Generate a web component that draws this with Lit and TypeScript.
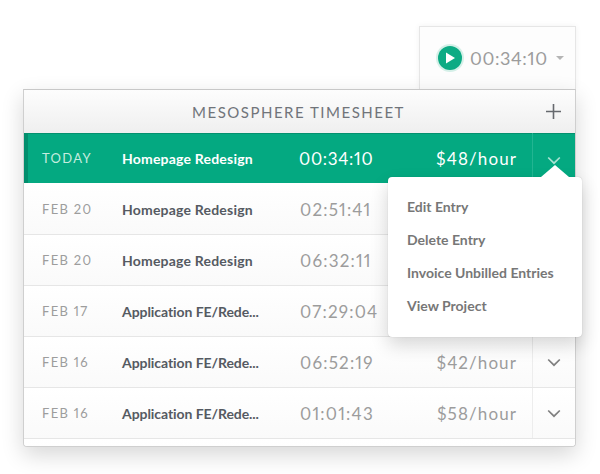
import { LitElement, html, css } from "lit";
import { customElement } from "lit/decorators.js";

// rates of the first three rows sit under the open menu, so they are left out
const rows = [
  { date: "FEB 20", name: "Homepage Redesign", time: "02:51:41", rate: "" },
  { date: "FEB 20", name: "Homepage Redesign", time: "06:32:11", rate: "" },
  { date: "FEB 17", name: "Application FE/Rede...", time: "07:29:04", rate: "" },
  { date: "FEB 16", name: "Application FE/Rede...", time: "06:52:19", rate: "$42/hour" },
  { date: "FEB 16", name: "Application FE/Rede...", time: "01:01:43", rate: "$58/hour" },
];

const chevron = html`<svg width="14" height="9" viewBox="0 0 14 9"><path d="M1.2 1.5 7 7.2l5.8-5.7" fill="none" stroke="currentColor" stroke-width="1.7"/></svg>`;

@customElement("app-root")
export class AppRoot extends LitElement {
  static styles = css`
    :host {
      display: block;
      width: 600px;
      height: 474px;
      overflow: hidden;
      background: #fff;
      font-family: Lato, "Open Sans", sans-serif;
      font-variant-numeric: proportional-nums;
      -webkit-font-smoothing: antialiased;
    }
    .stage {
      position: relative;
      display: flex;
      flex-direction: column;
      align-items: flex-end;
      padding: 26px 24px 0 23px;
    }
    .timer {
      display: flex;
      align-items: center;
      gap: 8px;
      box-sizing: border-box;
      width: 157px;
      height: 63px;
      padding: 0 0 0 18px;
      background: #fdfdfd;
      border: 1px solid #e6e6e6;
      border-bottom: none;
      box-shadow: 0 0 6px rgba(0, 0, 0, 0.06);
    }
    .play {
      display: flex;
      align-items: center;
      justify-content: center;
      width: 24px;
      height: 24px;
      border-radius: 50%;
      background: #0dab84;
      box-shadow: 0 0 0 2px #d5f0e8;
    }
    .timer-text {
      font-size: 18px;
      letter-spacing: 0.6px;
      color: #9c9c9c;
    }
    .caret {
      width: 0;
      height: 0;
      margin-left: 0;
      border: 4px solid transparent;
      border-top: 4px solid #b5b5b5;
      border-bottom: none;
    }
    .panel {
      box-sizing: border-box;
      width: 553px;
      height: 358px;
      overflow: hidden;
      background: #fff;
      border: 1px solid #cfcfcf;
      border-top-color: #c8c8c8;
      border-radius: 0 0 4px 4px;
      box-shadow: 0 8px 22px rgba(0, 0, 0, 0.16);
      position: relative;
    }
    .head {
      display: flex;
      align-items: center;
      justify-content: center;
      position: relative;
      height: 43px;
      padding-right: 2px;
      background: linear-gradient(#fdfdfd, #efefef);
      font-size: 15px;
      letter-spacing: 1.5px;
      color: #70747a;
    }
    .plus {
      position: absolute;
      right: 14px;
      top: 14px;
      display: block;
    }
    .list {
      padding-top: 1px;
    }
    .row {
      display: grid;
      grid-template-columns: 80px 177px 100px 1fr 43px;
      align-items: center;
      height: 51px;
      box-sizing: border-box;
      padding-left: 18px;
      background: linear-gradient(#fff, #fafafa);
      border-bottom: 1px solid #e6e6e6;
    }
    .date {
      font-size: 13px;
      letter-spacing: 1.3px;
      color: #9d9d9d;
    }
    .name {
      font-size: 14px;
      font-weight: 700;
      letter-spacing: 0.2px;
      color: #555a62;
      white-space: nowrap;
    }
    .name.long {
      letter-spacing: -0.07px;
    }
    .time {
      padding-left: 1px;
      font-size: 17px;
      letter-spacing: 1.2px;
      color: #9c9c9c;
    }
    .rate {
      font-size: 17px;
      letter-spacing: 1.1px;
      text-align: right;
      padding-right: 15px;
      color: #9c9c9c;
    }
    .more {
      align-self: stretch;
      display: flex;
      align-items: center;
      justify-content: center;
      border-left: 1px solid #ededed;
      color: #808080;
    }
    .row.active {
      height: 50px;
      padding-left: 18px;
      background: #04a981;
      border-bottom: none;
      box-shadow: inset 4px 0 0 #028e6d, inset 0 1px 0 #03916f;
    }
    .active .date {
      color: #c4ecdf;
    }
    .active .name,
    .active .time,
    .active .rate {
      color: #fff;
    }
    .active .time {
      padding-left: 0;
      letter-spacing: 0.7px;
    }
    .active .more {
      border-left-color: #22b592;
      color: #a9e2d2;
      padding-top: 4px;
    }
    .menu {
      position: absolute;
      left: 388px;
      top: 177px;
      box-sizing: border-box;
      width: 194px;
      height: 160px;
      padding: 13px 19px;
      background: #fff;
      border-radius: 4px;
      box-shadow: 0 0 1px rgba(0, 0, 0, 0.25), 0 8px 18px rgba(0, 0, 0, 0.16);
      display: flex;
      flex-direction: column;
    }
    .menu::before {
      content: "";
      position: absolute;
      right: 13px;
      top: -12px;
      width: 0;
      height: 0;
      border-left: 14px solid transparent;
      border-right: 14px solid transparent;
      border-bottom: 12px solid #fff;
    }
    .menu div {
      height: 33px;
      line-height: 33px;
      font-size: 14px;
      font-weight: 700;
      color: #777;
      white-space: nowrap;
    }
  `;

  renderRow(r: { date: string; name: string; time: string; rate: string }, active = false) {
    return html`
      <div class="row ${active ? "active" : ""}">
        <span class="date">${r.date}</span>
        <span class="name ${r.name.endsWith("...") ? "long" : ""}">${r.name}</span>
        <span class="time">${r.time}</span>
        <span class="rate">${r.rate}</span>
        <span class="more">${chevron}</span>
      </div>
    `;
  }

  render() {
    return html`
      <div class="stage">
        <div class="timer">
          <span class="play">
            <svg width="10" height="12" viewBox="0 0 10 12"><path d="M1 0.5 10 6 1 11.5Z" fill="#fff"/></svg>
          </span>
          <span class="timer-text">00:34:10</span>
          <span class="caret"></span>
        </div>
        <div class="panel">
          <div class="head">
            MESOSPHERE TIMESHEET
            <svg class="plus" width="15" height="15" viewBox="0 0 15 15"><path d="M7.5 0v15M0 7.5h15" stroke="#66696e" stroke-width="1.6"/></svg>
          </div>
          ${this.renderRow({ date: "TODAY", name: "Homepage Redesign", time: "00:34:10", rate: "$48/hour" }, true)}
          <div class="list">
            ${rows.map((r) => this.renderRow(r))}
            <div class="row"></div>
          </div>
        </div>
        <div class="menu">
          <div>Edit Entry</div>
          <div>Delete Entry</div>
          <div>Invoice Unbilled Entries</div>
          <div>View Project</div>
        </div>
      </div>
    `;
  }
}
